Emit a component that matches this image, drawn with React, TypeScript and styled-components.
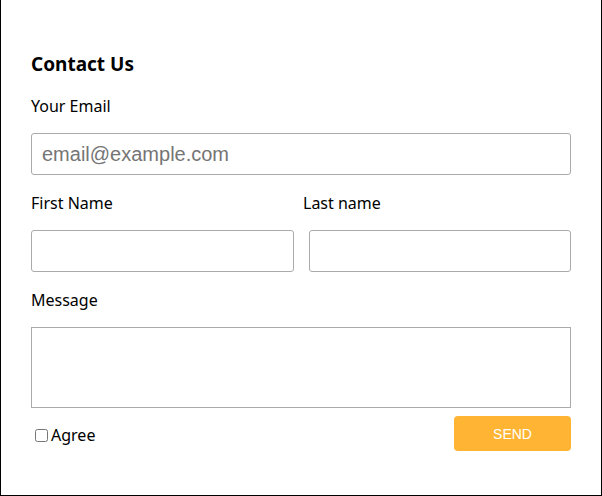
import React from "react";
import styled, { createGlobalStyle } from "styled-components";

const GlobalStyle = createGlobalStyle`
    html, body {
        margin: 0;
        padding: 0;
        background: #ffffff;
    }
    body {
        font-family: "Noto Sans", "Open Sans", sans-serif;
        color: #000;
    }
`

const Page = styled.div`
    width: 602px;
    height: 496px;
    box-sizing: border-box;
    border: 1px solid #000;
    border-top: none;
    padding: 51px 30px 0 30px;
`

const Title = styled.h2`
    margin: 0 0 18px 0;
    font-size: 19px;
    line-height: 26px;
    font-weight: 700;
`

const Label = styled.label`
    display: block;
    font-size: 16px;
    line-height: 22px;
    margin: 0 0 16px 0;
`

const TextInput = styled.input`
    display: block;
    box-sizing: border-box;
    width: 100%;
    height: 42px;
    margin: 0 0 17px 0;
    padding: 0 10px;
    border: 1px solid #aaaaaa;
    border-radius: 3px;
    font-family: "Liberation Sans", Arial, sans-serif;
    font-size: 20px;
    outline: none;
    &::placeholder {
        color: #757575;
    }
`

const NameGrid = styled.div`
    display: grid;
    grid-template-columns: 1fr 1fr;
    column-gap: 4px;
`

const InputPair = styled.div`
    display: grid;
    grid-template-columns: 1fr 1fr;
    column-gap: 15px;
`

const MessageBox = styled.textarea`
    display: block;
    box-sizing: border-box;
    width: 100%;
    height: 81px;
    margin: 0;
    border: 1px solid #aaaaaa;
    border-radius: 0;
    resize: none;
    outline: none;
`

const Footer = styled.div`
    display: flex;
    justify-content: space-between;
    align-items: center;
    margin-top: 8px;
`

const Agree = styled.label`
    display: flex;
    align-items: center;
    font-size: 16px;
    line-height: 22px;
    margin-top: 3px;
    padding-left: 3px;
    & > input {
        width: 13px;
        height: 13px;
        margin: 0 3px 0 1px;
    }
`

const SendButton = styled.button`
    width: 117px;
    height: 35px;
    border: none;
    border-radius: 4px;
    background-color: #ffb533;
    color: #ffffff;
    font-family: "Liberation Sans", Arial, sans-serif;
    font-size: 14px;
    cursor: pointer;
`

export default function App() {
    return (
        <>
            <GlobalStyle />
            <Page>
                <Title>Contact Us</Title>
                <Label>Your Email</Label>
                <TextInput type="email" placeholder="email@example.com" />
                <NameGrid>
                    <Label>First Name</Label>
                    <Label>Last name</Label>
                </NameGrid>
                <InputPair>
                    <TextInput type="text" />
                    <TextInput type="text" />
                </InputPair>
                <Label>Message</Label>
                <MessageBox />
                <Footer>
                    <Agree><input type="checkbox" />Agree</Agree>
                    <SendButton>SEND</SendButton>
                </Footer>
            </Page>
        </>
    )
}
